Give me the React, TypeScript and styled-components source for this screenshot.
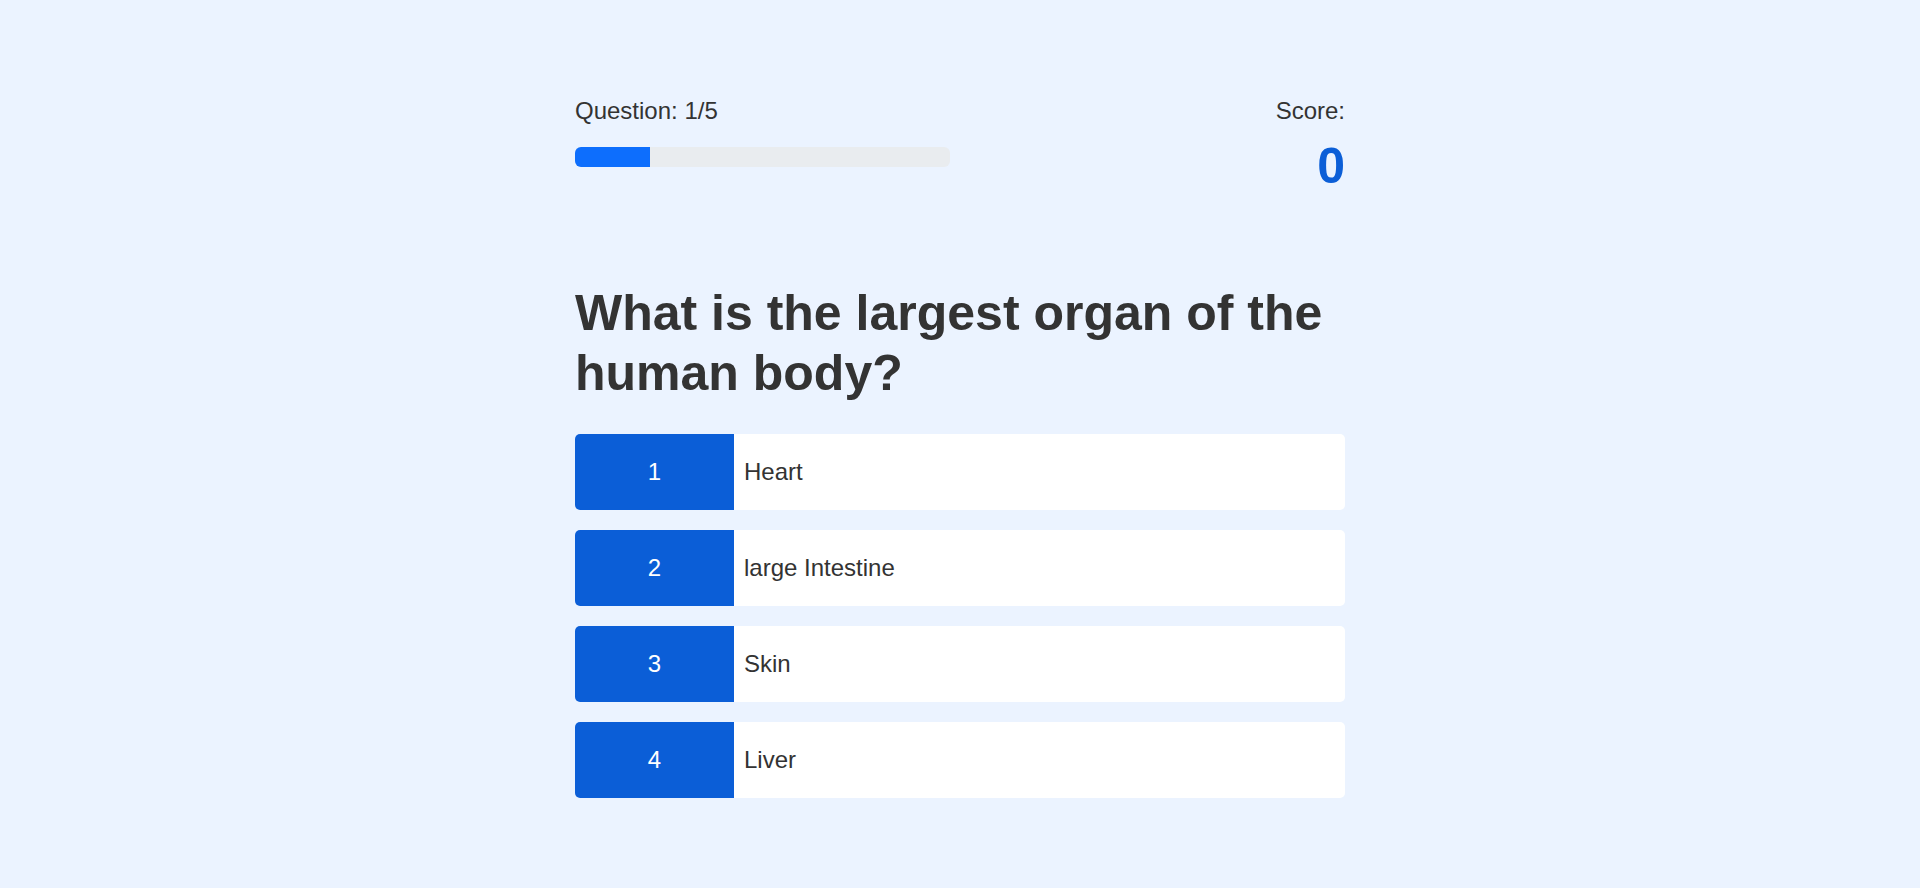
import React from "react";
import styled, { createGlobalStyle } from "styled-components";

const GlobalStyle = createGlobalStyle`
  html, body {
    margin: 0;
    padding: 0;
    background: #ebf3ff;
  }
  body {
    font-family: "Liberation Sans", Arial, Helvetica, sans-serif;
    color: #333333;
  }
`;

const Page = styled.div`
  min-height: 888px;
  background: #ebf3ff;
`;

const Container = styled.main`
  width: 770px;
  margin: 0 auto;
  padding-top: 97px;
`;

const Header = styled.header`
  display: flex;
  justify-content: space-between;
  align-items: flex-start;
`;

const Side = styled.div<{ $align: "left" | "right" }>`
  display: flex;
  flex-direction: column;
  align-items: ${(p) => (p.$align === "right" ? "flex-end" : "flex-start")};
  text-align: ${(p) => p.$align};
`;

const Label = styled.div`
  font-size: 24px;
  line-height: 28px;
  color: #333333;
`;

const Track = styled.div`
  margin-top: 22px;
  width: 375px;
  height: 20px;
  border-radius: 6px;
  background: #e9ecef;
  overflow: hidden;
  display: flex;
`;

const Fill = styled.div`
  height: 100%;
  background: #0d6efd;
`;

const ScoreValue = styled.div`
  margin-top: 16px;
  font-size: 50px;
  line-height: 50px;
  font-weight: 700;
  color: #0b5ed7;
`;

const Heading = styled.h1`
  margin: 92px 0 31px;
  font-size: 50px;
  line-height: 60px;
  font-weight: 700;
  color: #333333;
`;

const Options = styled.div`
  display: flex;
  flex-direction: column;
  gap: 20px;
`;

const Option = styled.button`
  all: unset;
  display: flex;
  height: 76px;
  background: #ffffff;
  border-radius: 5px;
  overflow: hidden;
  cursor: pointer;
  font-family: "Liberation Sans", Arial, Helvetica, sans-serif;
`;

const OptionNumber = styled.span`
  flex: 0 0 159px;
  display: flex;
  align-items: center;
  justify-content: center;
  background: #0b5ed7;
  color: #ffffff;
  font-size: 24px;
`;

const OptionText = styled.span`
  display: flex;
  align-items: center;
  padding-left: 10px;
  font-size: 24px;
  color: #333333;
`;

const answers = ["Heart", "large Intestine", "Skin", "Liver"];

export default function App() {
  const current = 1;
  const total = 5;
  return (
    <Page>
      <GlobalStyle />
      <Container>
        <Header>
          <Side $align="left">
            <Label>
              Question: {current}/{total}
            </Label>
            <Track>
              <Fill style={{ width: `${(current / total) * 100}%` }} />
            </Track>
          </Side>
          <Side $align="right">
            <Label>Score:</Label>
            <ScoreValue>0</ScoreValue>
          </Side>
        </Header>
        <Heading>What is the largest organ of the human body?</Heading>
        <Options>
          {answers.map((a, i) => (
            <Option key={a}>
              <OptionNumber>{i + 1}</OptionNumber>
              <OptionText>{a}</OptionText>
            </Option>
          ))}
        </Options>
      </Container>
    </Page>
  );
}
